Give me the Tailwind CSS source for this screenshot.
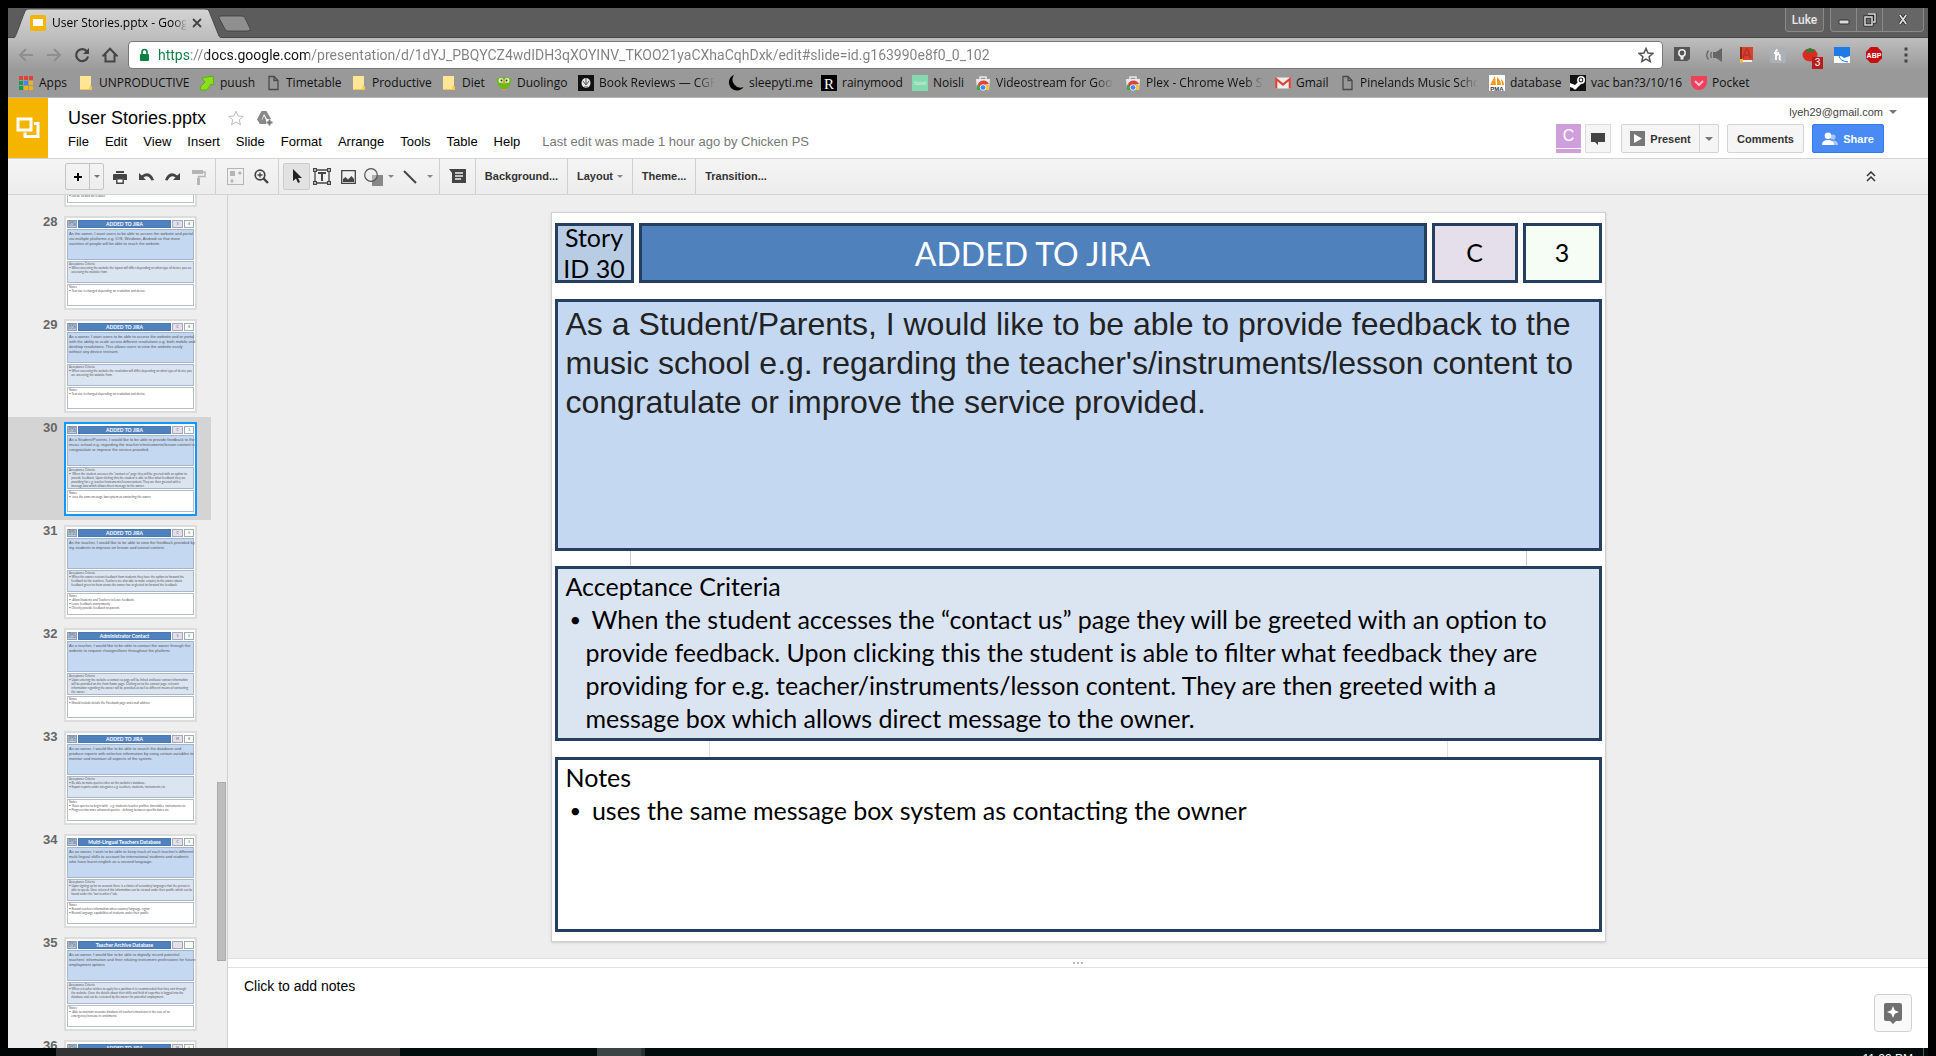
<!DOCTYPE html>
<html lang="en">
<head>
<meta charset="utf-8">
<title>User Stories.pptx - Google Slides</title>
<script src="https://cdn.jsdelivr.net/npm/@tailwindcss/browser@4"></script>
</head>
<body class="flex h-screen flex-col overflow-hidden bg-black font-['Liberation_Sans',Arial,sans-serif] text-black">
<svg class="hidden">
  <symbol id="folder" viewBox="0 0 16 16"><path d="M2 1h11v10l1 1v3H2z" fill="#ffe08a"/><path d="M2 1h11v13H2z" fill="#ffe596"/><path d="M11 15l1-5 2 2v3z" fill="#f6c94b"/><path d="M2 14h10v1H2z" fill="#efc55a"/></symbol>
  <symbol id="page" viewBox="0 0 16 16"><path d="M4 1.5h5l4 4v9H4zM9 1.5v4h4" fill="none" stroke="#4a4a4a" stroke-width="1.3"/></symbol>
  <symbol id="webstore" viewBox="0 0 16 16"><path d="M1 4h14l-1 11H2z" fill="#e9e9e9"/><path d="M5 4V2h6v2" fill="none" stroke="#e9e9e9" stroke-width="1.5"/><path d="M2 15a6 6 0 0 1 1-6l3 4v2z" fill="#3aa757"/><path d="M3 9a6 6 0 0 1 11 0l-6 1-3 3z" fill="#db4437"/><path d="M9 10h5l-.4 5H9z" fill="#fbc02d"/><circle cx="8" cy="12.5" r="2.8" fill="#4285f4" stroke="#fff" stroke-width=".8"/></symbol>
  <symbol id="caret" viewBox="0 0 8 4"><path d="M0 0h8L4 4z" fill="currentColor"/></symbol>
</svg>

<div class="mx-2 mt-2 flex min-h-0 flex-1 flex-col bg-white">

  <!-- Window title strip -->
  <header class="flex h-[30px] shrink-0 items-start justify-between border-b border-[#484848] bg-[#5c5c5c]">
    <div class="flex items-start">
      <div class="relative ml-1 h-[30px] w-[210px]">
        <svg class="absolute inset-0" width="210" height="30" viewBox="0 0 210 30"><defs><linearGradient id="tab" x1="0" y1="0" x2="0" y2="1"><stop offset="0" stop-color="#d4d4d4"/><stop offset="1" stop-color="#bdbdbd"/></linearGradient></defs><path d="M2 30C4 30 12 3 14 2Q15 1 17 1H193Q196 1 197 3L207 28Q208 30 210 30Z" fill="url(#tab)"/><path d="M2 30C4 30 12 3 14 2Q15 1 17 1H193Q196 1 197 3L207 28Q208 30 210 30" fill="none" stroke="#484848"/></svg>
        <div class="relative flex h-[30px] items-center pl-[18px]">
          <svg width="16" height="16" viewBox="0 0 16 16"><rect width="16" height="16" rx="2" fill="#f5b400"/><path d="M3 4h10v7H3z" fill="#fff"/></svg>
          <span class="ml-1.5 w-[134px] overflow-hidden bg-linear-to-r from-black from-90% to-black/10 bg-clip-text font-['Open_Sans',sans-serif] text-xs leading-4 whitespace-nowrap text-transparent">User Stories.pptx - Google Slides</span>
          <button class="ml-1.5" aria-label="Close tab"><svg width="10" height="10" viewBox="0 0 10 10"><path d="M1 1l8 8M9 1L1 9" stroke="#444" stroke-width="1.8"/></svg></button>
        </div>
      </div>
      <button class="mt-[7px] -ml-1" aria-label="New tab"><svg width="34" height="17" viewBox="0 0 34 18" preserveAspectRatio="none"><path d="M3 1H24Q26 1 27 3L32 14Q33 17 30 17H10Q8 17 7 15L1 3Q0 1 3 1Z" fill="#8f8f8f" stroke="#454545"/></svg></button>
    </div>
    <div class="flex pr-1 text-[#e8e8e8]">
      <button class="mr-1.5 h-6 w-[39px] rounded-b border border-t-0 border-[#8a8a8a] bg-[#666] font-['Roboto',sans-serif] text-xs leading-4 font-medium">Luke</button>
      <div class="flex h-6 rounded-b border border-t-0 border-[#8a8a8a] bg-[#666]">
        <button class="flex w-[26px] items-center justify-center border-r border-[#8a8a8a]" aria-label="Minimise"><svg width="12" height="12" viewBox="0 0 12 12"><rect x="1" y="6" width="10" height="4" rx="1" fill="#ddd" stroke="#333"/></svg></button>
        <button class="flex w-[26px] items-center justify-center border-r border-[#8a8a8a]" aria-label="Restore"><svg width="14" height="14" viewBox="0 0 14 14"><path d="M5 1h7v8h-2M2 4h7v8H2z" fill="none" stroke="#222" stroke-width="3"/><path d="M5 1h7v8h-2M2 4h7v8H2z" fill="none" stroke="#ddd" stroke-width="1.5"/></svg></button>
        <button class="flex w-10 items-center justify-center" aria-label="Close"><svg width="12" height="11" viewBox="0 0 13 12"><path d="M3 1l7 10M10 1L3 11" stroke="#222" stroke-width="3.6"/><path d="M3 1l7 10M10 1L3 11" stroke="#ddd" stroke-width="2"/></svg></button>
      </div>
    </div>
  </header>

  <!-- Address bar and bookmarks -->
  <div class="shrink-0 border-b border-[#b5b5b5] bg-linear-to-b from-[#bebebe] to-[#999] to-55% pb-0.5">
    <div class="flex h-[33px] items-center pr-1.5 pl-1">
      <button class="flex w-7 justify-center" aria-label="Back"><svg width="16" height="16" viewBox="0 0 16 16"><path d="M15 8H2M8 2L2 8l6 6" fill="none" stroke="#8e8e8e" stroke-width="2"/></svg></button>
      <button class="flex w-7 justify-center" aria-label="Forward"><svg width="16" height="16" viewBox="0 0 16 16"><path d="M1 8h13M8 2l6 6-6 6" fill="none" stroke="#8e8e8e" stroke-width="2"/></svg></button>
      <button class="flex w-7 justify-center" aria-label="Reload"><svg width="16" height="16" viewBox="0 0 16 16"><path d="M13 4.5A6 6 0 1 0 14 9.5" fill="none" stroke="#444" stroke-width="2.2"/><path d="M15 1v6H9z" fill="#444"/></svg></button>
      <button class="flex w-7 justify-center" aria-label="Home"><svg width="16" height="16" viewBox="0 0 16 16"><path d="M1.5 8.5L8 1.8l6.500 6.700H12.500V14.500h-9V8.500z" fill="none" stroke="#444" stroke-width="2"/></svg></button>
      <div class="ml-1 flex h-7 flex-1 items-center rounded-sm border border-[#777] bg-white px-2">
        <svg class="mx-0.5" width="11" height="14" viewBox="0 0 11 14"><rect x="1" y="6" width="9" height="7" rx="1" fill="#0b8043"/><path d="M3 6V4a2.500 2.500 0 0 1 5 0v2" fill="none" stroke="#0b8043" stroke-width="1.600"/></svg>
        <input aria-label="Address" class="ml-1.5 min-w-0 flex-1 bg-[linear-gradient(90deg,#0b8043_0_33px,#808080_33px_49px,#111_49px_151px,#808080_151px)] bg-clip-text font-['Roboto',sans-serif] text-sm leading-5 text-transparent outline-none" value="https://docs.google.com/presentation/d/1dYJ_PBQYCZ4wdIDH3qXOYINV_TKOO21yaCXhaCqhDxk/edit#slide=id.g163990e8f0_0_102">
        <button aria-label="Bookmark this page"><svg width="16" height="16" viewBox="0 0 16 16"><path d="M8 1.500l2 4.600 4.800.4-3.700 3.200 1.100 4.800L8 12l-4.200 2.500 1.100-4.800L1.200 6.500 6 6.100z" fill="none" stroke="#555" stroke-width="1.500"/></svg></button>
      </div>
      <div class="ml-[3px] flex">
        <button class="flex w-8 justify-center" aria-label="Page dimmer"><svg width="16" height="16" viewBox="0 0 16 16"><path d="M0 0h16v12l-3 2H0z" fill="#555"/><circle cx="8" cy="6" r="3.200" fill="none" stroke="#eee" stroke-width="1.500"/><path d="M6.500 9h3v3.500h-3z" fill="#eee"/></svg></button>
        <button class="flex w-8 justify-center" aria-label="Volume"><svg width="18" height="16" viewBox="0 0 18 16"><path d="M8 5h3l6-4v14l-6-4H8z" fill="#666"/><path d="M6.500 5Q5 8 6.500 11M3.500 3.500Q0 8 3.500 12.500" fill="none" stroke="#666" stroke-width="1.400"/></svg></button>
        <button class="flex w-8 justify-center" aria-label="Dictionary"><svg width="16" height="16" viewBox="0 0 16 16"><path d="M2 0h13v13H4l-2 2z" fill="#d8402f"/><path d="M2 0h2v13l-2 1z" fill="#8d2a20"/><path d="M5 11l3.200-9h1.200l3.200 9M6.500 8h5" fill="none" stroke="#b53224" stroke-width="1.500"/><path d="M2 13h12v2H3z" fill="#eee"/><path d="M2 12h3v4l-1.500-1L2 16z" fill="#fbc02d"/></svg></button>
        <button class="flex w-8 justify-center" aria-label="Honey"><svg width="16" height="16" viewBox="0 0 16 16"><rect width="16" height="16" rx="2" fill="#adb1b4"/><path d="M6 13V4.500Q6 3 7.500 3M4 6h5M6 9Q7.500 7 9 7.500T9.500 11q0 2 1.500 1.500" fill="none" stroke="#fff" stroke-width="1.800"/></svg></button>
        <button class="relative flex w-8 justify-center" aria-label="Timer"><svg width="16" height="16" viewBox="0 0 16 16"><ellipse cx="8" cy="8" rx="7.500" ry="6.500" fill="#d92b20"/><path d="M3 3l3-1 2-1 2 1 4 1-3 1 1 2-3-1-1 1-1-1-3 1 1-2z" fill="#2e7d32"/></svg><span class="absolute top-2.5 left-[18px] h-3 w-[11px] bg-[#b71c1c] text-center text-[10px] leading-3 text-white">3</span></button>
        <button class="flex w-8 justify-center" aria-label="Wave"><svg width="16" height="16" viewBox="0 0 16 16"><path d="M0 0h16v16H0z" fill="#1e7be6"/><path d="M0 9h6q2 0 4 2l6-2v7H0z" fill="#fff"/><path d="M5 9q1 5 9 6" fill="none" stroke="#1e7be6"/></svg></button>
        <button class="flex w-8 justify-center" aria-label="Adblock"><svg width="16" height="16" viewBox="0 0 16 16"><path d="M4.700 0h6.600L16 4.700v6.600L11.300 16H4.700L0 11.300V4.700z" fill="#c70d0d"/><text x="8" y="10.500" font-size="7" font-weight="700" font-family="Liberation Sans" text-anchor="middle" fill="#fff">ABP</text></svg></button>
        <button class="flex w-8 justify-center" aria-label="Menu"><svg width="4" height="16" viewBox="0 0 4 16"><path d="M.5.500h3v3h-3zM.5 6.500h3v3h-3zM.5 12.500h3v3h-3z" fill="#444"/></svg></button>
      </div>
    </div>
    <nav class="flex h-6 items-center pl-2.5 font-['Open_Sans',sans-serif] text-xs leading-4 whitespace-nowrap text-[#111]">
      <a href="#" class="flex w-[60px] gap-[5px]"><svg width="16" height="16" viewBox="0 0 16 16"><path d="M1 1h4v4H1z" fill="#db4437"/><path d="M6 1h4v4H6zM11 1h4v4h-4z" fill="#db4437"/><path d="M1 6h4v4H1z" fill="#0f9d58"/><path d="M6 6h4v4H6z" fill="#4285f4"/><path d="M11 6h4v4h-4z" fill="#f4b400"/><path d="M1 11h4v4H1z" fill="#0f9d58"/><path d="M6 11h4v4H6zM11 11h4v4h-4z" fill="#f4b400"/></svg>Apps</a>
      <a href="#" class="flex w-[121px] gap-[5px]"><svg width="16" height="16"><use href="#folder"/></svg>UNPRODUCTIVE</a>
      <a href="#" class="flex w-[66px] gap-[5px]"><svg width="16" height="16" viewBox="0 0 16 16"><path d="M3 3l11-2 1 9-3-1-4 6H1l1-4 4-4z" fill="#8be01a" stroke="#5fae12"/></svg>puush</a>
      <a href="#" class="flex w-[86px] gap-[5px]"><svg width="16" height="16"><use href="#page"/></svg>Timetable</a>
      <a href="#" class="flex w-[90px] gap-[5px]"><svg width="16" height="16"><use href="#folder"/></svg>Productive</a>
      <a href="#" class="flex w-[55px] gap-[5px]"><svg width="16" height="16"><use href="#folder"/></svg>Diet</a>
      <a href="#" class="flex w-[82px] gap-[5px]"><svg width="16" height="16" viewBox="0 0 16 16"><path d="M0 3l3 1q5-4 10 0l3-1-2 7q-2 4-6 4t-6-4z" fill="#6cb71c"/><circle cx="5" cy="5.500" r="2.500" fill="#dff2b0"/><circle cx="11" cy="5.500" r="2.500" fill="#dff2b0"/><circle cx="5.500" cy="5.500" r="1" fill="#333"/><circle cx="10.500" cy="5.500" r="1" fill="#333"/><path d="M6.500 7h3L8 10zM6 14h4l-2 2z" fill="#f39b1f"/></svg>Duolingo</a>
      <a href="#" class="flex w-[150px] gap-[5px] pr-3.5"><svg class="shrink-0" width="16" height="16" viewBox="0 0 16 16"><path d="M0 0h16v16H0z" fill="#111"/><ellipse cx="8" cy="8" rx="4.500" ry="5" fill="#e8e8e8"/><path d="M8 3v6M5 6l3 4 3-4M6 12h4" fill="none" stroke="#555"/></svg><span class="flex-1 overflow-hidden bg-linear-to-r from-[#111] from-85% to-[#111]/5 bg-clip-text text-transparent">Book Reviews — CGPGrey</span></a>
      <a href="#" class="flex w-[93px] gap-[5px]"><svg width="16" height="16" viewBox="0 0 16 16"><path d="M6 0A8 8 0 1 0 15.500 12 8 8 0 0 1 6 0z" fill="#000"/></svg>sleepyti.me</a>
      <a href="#" class="flex w-[91px] gap-[5px]"><svg width="16" height="16" viewBox="0 0 16 16"><path d="M0 0h16v16H0z" fill="#000"/><text x="8" y="13.500" font-size="15" font-family="Liberation Serif" text-anchor="middle" fill="#fff">R</text></svg>rainymood</a>
      <a href="#" class="flex w-[63px] gap-[5px]"><svg width="16" height="16" viewBox="0 0 16 16"><path d="M0 0h16v16H0z" fill="#84d9ae"/><text x="8" y="9.500" font-size="5" font-family="Liberation Sans" text-anchor="middle" fill="#d7f5e6">Noisli</text></svg>Noisli</a>
      <a href="#" class="flex w-[150px] gap-[5px] pr-3"><svg class="shrink-0" width="16" height="16"><use href="#webstore"/></svg><span class="flex-1 overflow-hidden bg-linear-to-r from-[#111] from-85% to-[#111]/5 bg-clip-text text-transparent">Videostream for Google Chrome</span></a>
      <a href="#" class="flex w-[150px] gap-[5px] pr-3"><svg class="shrink-0" width="16" height="16"><use href="#webstore"/></svg><span class="flex-1 overflow-hidden bg-linear-to-r from-[#111] from-85% to-[#111]/5 bg-clip-text text-transparent">Plex - Chrome Web Store</span></a>
      <a href="#" class="flex w-16 gap-[5px]"><svg width="16" height="16" viewBox="0 0 16 16"><path d="M0 2.500h16v11H0z" fill="#eee"/><path d="M1.200 13.500V4L8 9.500 14.800 4v9.500" fill="none" stroke="#db4437" stroke-width="2.200"/></svg>Gmail</a>
      <a href="#" class="flex w-[150px] gap-[5px] pr-3"><svg class="shrink-0" width="16" height="16"><use href="#page"/></svg><span class="flex-1 overflow-hidden bg-linear-to-r from-[#111] from-85% to-[#111]/5 bg-clip-text text-transparent">Pinelands Music School</span></a>
      <a href="#" class="flex w-[81px] gap-[5px]"><svg width="16" height="16" viewBox="0 0 16 16"><path d="M0 0h16v16H0z" fill="#fff"/><path d="M6 1l1 9H1zM8 2q4 3 4 8H8zM12 4q3 2 3 6h-2z" fill="#f39b1f"/><text x="8" y="15.500" font-size="6" font-weight="700" font-family="Liberation Sans" text-anchor="middle" fill="#334">PMA</text></svg>database</a>
      <a href="#" class="flex w-[121px] gap-[5px]"><svg width="16" height="16" viewBox="0 0 16 16"><path d="M0 0h16v16H0z" fill="#111"/><circle cx="11" cy="5" r="3.200" fill="none" stroke="#fff" stroke-width="1.600"/><circle cx="11" cy="5" r="1.400" fill="#fff"/><path d="M0 8l5 2 3-3 3 2-4 4q-2 3-4 0l-3-1z" fill="#fff"/></svg>vac ban?3/10/16</a>
      <a href="#" class="flex gap-[5px]"><svg width="16" height="16" viewBox="0 0 16 16"><path d="M0 1h16v6a8 8 0 0 1-16 0z" fill="#ee4056"/><path d="M4 6l4 4 4-4" fill="none" stroke="#fbd" stroke-width="2"/></svg>Pocket</a>
    </nav>
  </div>

  <!-- Document header -->
  <div class="flex h-[60px] shrink-0">
    <a href="#" aria-label="Slides home" class="flex w-10 items-center justify-center bg-[#f5b400]"><svg width="24" height="22" viewBox="0 0 24 22"><path d="M2 2h13v11H2z" fill="none" stroke="#fff" stroke-width="3"/><path d="M18 6.500h4V19.500H9v-4" fill="none" stroke="#fff" stroke-width="3"/></svg></a>
    <div class="flex-1 pl-5">
      <div class="flex h-10 items-center">
        <h1 class="text-lg leading-6">User Stories.pptx</h1>
        <button class="ml-[22px]" aria-label="Star"><svg width="16" height="16" viewBox="0 0 16 16"><path d="M8 1.200l2 4.800 5.200.4-4 3.400 1.300 5L8 12l-4.500 2.800 1.300-5-4-3.400L6 6z" fill="none" stroke="#bbb"/></svg></button>
        <button class="ml-3" aria-label="Add to My Drive"><svg width="17" height="16" viewBox="0 0 17 16"><path d="M5.500 1h5l4.500 8h-4L8 4 4 14 1 9.500z" fill="#888"/><path d="M5 10h5v4H3.500zM8 6l2 4H6z" fill="#888"/><path d="M13.500 9v7M10 12.500h7" stroke="#fff" stroke-width="3"/><path d="M13.500 9.500v6M10.500 12.500h6" stroke="#777" stroke-width="2"/></svg></button>
      </div>
      <div class="-mt-1 flex gap-4 text-[13px] leading-4 whitespace-nowrap">
        <button>File</button><button>Edit</button><button>View</button><button>Insert</button><button>Slide</button><button>Format</button><button>Arrange</button><button>Tools</button><button>Table</button><button>Help</button><a href="#" class="ml-1.5 text-[#777]">Last edit was made 1 hour ago by Chicken PS</a>
      </div>
    </div>
    <div class="pr-[31px]">
      <button class="ml-auto flex h-[26px] items-center gap-1.5 pt-0.5 text-[11px] leading-4 text-[#444]">lyeh29@gmail.com<svg class="text-[#777]" width="8" height="4"><use href="#caret"/></svg></button>
      <div class="flex pr-[13px] text-[11px] leading-4 font-bold text-[#333]">
        <div class="mr-1 flex w-[25px] flex-col gap-px text-center"><span class="bg-[#cf9fdb] text-base leading-6 font-normal text-white">C</span><span class="h-1 bg-[#cf9fdb]"></span></div>
        <button class="mr-2.5 flex h-[29px] w-[26px] items-center justify-center border border-[#dcdcdc] bg-[#f5f5f5]" aria-label="Chat"><svg width="14" height="14" viewBox="0 0 14 14"><path d="M0 1h14v9H7v3L4 10H0z" fill="#444"/></svg></button>
        <div class="mr-2 flex h-[29px] rounded-xs border border-[#d4d4d4] bg-[#f5f5f5]">
          <button class="flex w-[78px] items-center justify-center gap-[5px] border-r border-[#d4d4d4]"><svg width="15" height="15" viewBox="0 0 15 15"><path d="M0 0h15v15H0z" fill="#777"/><path d="M4 3l8 4.500L4 12z" fill="#fff"/></svg>Present</button>
          <button class="flex w-[18px] items-center justify-center text-[#777]" aria-label="Present options"><svg width="8" height="4"><use href="#caret"/></svg></button>
        </div>
        <button class="mr-2 h-[29px] w-[77px] rounded-xs border border-[#d4d4d4] bg-[#f5f5f5]">Comments</button>
        <button class="flex h-[29px] w-[72px] items-center justify-center gap-[5px] rounded-xs border border-[#3079ed] bg-[#4a8af4] text-white"><svg width="16" height="14" viewBox="0 0 16 14"><circle cx="11" cy="5" r="2.600" fill="#a9c9fb"/><path d="M9 13q0-4 2-4.500 5 0 5 4.500z" fill="#a9c9fb"/><circle cx="6" cy="3.800" r="3.300" fill="#fff"/><path d="M0 13q0-5 6-5t6 5z" fill="#fff"/></svg>Share</button>
      </div>
    </div>
  </div>

  <!-- Editing toolbar -->
  <div class="flex h-[37px] shrink-0 items-center justify-between border-y border-[#d4d4d4] bg-linear-to-b from-[#f5f5f5] to-[#ececec] text-[11px] font-bold text-[#333]">
    <div class="flex h-full items-center">
      <div class="mr-[3px] ml-[57px] flex h-[27px] w-[39px] rounded-xs border border-[#c4c4c4]">
        <button class="flex w-6 items-center justify-center border-r border-[#c4c4c4]" aria-label="New slide"><svg width="8" height="8" viewBox="0 0 8 8"><path d="M4 0v8M0 4h8" stroke="#000" stroke-width="2"/></svg></button>
        <button class="flex flex-1 items-center justify-center text-[#777]" aria-label="New slide layout"><svg width="6" height="3" viewBox="0 0 8 4"><use href="#caret"/></svg></button>
      </div>
      <button class="flex w-[26px] justify-center" aria-label="Print"><svg width="14" height="14" viewBox="0 0 14 14"><path d="M3 1h8v2H3zM1 4h12q1 0 1 1v5h-3V8H3v2H0V5q0-1 1-1z" fill="#444"/><path d="M3.800 8.800h6.400v4.400H3.800z" fill="#fff" stroke="#444" stroke-width="1.400"/></svg></button>
      <button class="flex w-[26px] justify-center" aria-label="Undo"><svg width="15" height="10" viewBox="0 0 15 10"><path d="M0 1v7h7L4.500 5.500Q9 2 12.500 8.500L15 8Q11-2.500 2.700 3.500z" fill="#444"/></svg></button>
      <button class="flex w-[26px] justify-center" aria-label="Redo"><svg width="15" height="10" viewBox="0 0 15 10"><path d="M15 1v7H8l2.500-2.500Q6 2 2.500 8.500L0 8Q4-2.500 12.300 3.500z" fill="#444"/></svg></button>
      <button class="flex w-[28px] justify-center" aria-label="Paint format"><svg width="14" height="16" viewBox="0 0 14 16"><path d="M0 1h11v4H0z" fill="#b5b5b5"/><path d="M11 3h2v4.500H6.500V10" fill="none" stroke="#b5b5b5" stroke-width="1.500"/><path d="M5 9h3v7H5z" fill="#b5b5b5"/></svg></button>
      <span class="ml-0.5 h-full w-px bg-[#d0d0d0]"></span>
      <button class="ml-1.5 flex w-[26px] justify-center" aria-label="Fit"><svg width="17" height="17" viewBox="0 0 17 17"><rect x=".5" y=".5" width="16" height="16" fill="none" stroke="#b5b5b5"/><path d="M11 5l3 0M12.500 3.500L14 5l-1.500 1.500M5 11v3M3.500 12.500L5 14l1.500-1.500" fill="none" stroke="#b5b5b5" stroke-width="1.300"/><path d="M3 3h5v5H3z" fill="#b5b5b5"/></svg></button>
      <button class="flex w-[26px] justify-center" aria-label="Zoom"><svg width="15" height="15" viewBox="0 0 15 15"><circle cx="6" cy="6" r="4.800" fill="none" stroke="#444" stroke-width="1.700"/><path d="M9.500 9.500L14 14" stroke="#444" stroke-width="2.400"/><path d="M6 3.500v5M3.500 6h5" stroke="#444" stroke-width="1.300"/></svg></button>
      <span class="ml-1 h-full w-px bg-[#d0d0d0]"></span>
      <button class="ml-1 flex h-[27px] w-[27px] items-center justify-center rounded-xs border border-[#ccc] bg-[#e2e2e2]" aria-label="Select"><svg width="10" height="15" viewBox="0 0 10 15"><path d="M1 0v12l3-2.500L6 14l2-1-2-4h4z" fill="#222"/></svg></button>
      <button class="flex w-6 justify-center" aria-label="Text box"><svg width="18" height="17" viewBox="0 0 18 17"><path d="M2 2h14v13H2z" fill="none" stroke="#444" stroke-width="1.300"/><path d="M0 0h4v4H0zM14 0h4v4h-4zM0 13h4v4H0zM14 13h4v4h-4z" fill="#444"/><path d="M1.200 1.200h1.600v1.600H1.200zM15.200 1.200h1.600v1.600h-1.600zM1.200 14.200h1.600v1.600H1.200zM15.200 14.200h1.600v1.600h-1.600z" fill="#fff"/><path d="M5 5h8M9 5v8" stroke="#444" stroke-width="2"/></svg></button>
      <button class="flex w-7 justify-center" aria-label="Image"><svg width="15" height="14" viewBox="0 0 15 14"><path d="M.7.700h13.600v12.600H.7z" fill="none" stroke="#444" stroke-width="1.300"/><path d="M2 12V9l2.500-2L7 9.500 10.500 6 13 9v3z" fill="#444"/></svg></button>
      <button class="flex w-[34px] items-center justify-center gap-1 text-[#888]" aria-label="Shape"><svg width="20" height="18" viewBox="0 0 20 18"><path d="M8 7h11v11H8z" fill="#888"/><circle cx="7" cy="7" r="6.300" fill="#eee" fill-opacity=".4" stroke="#555" stroke-width="1.200"/></svg><svg width="6" height="3" viewBox="0 0 8 4"><use href="#caret"/></svg></button>
      <button class="ml-1 flex w-[35px] items-center justify-center gap-2.5 text-[#888]" aria-label="Line"><svg width="14" height="14" viewBox="0 0 14 14"><path d="M1 1l12 12" stroke="#444" stroke-width="2"/></svg><svg width="6" height="3" viewBox="0 0 8 4"><use href="#caret"/></svg></button>
      <span class="ml-1 h-full w-px bg-[#d0d0d0]"></span>
      <button class="flex w-[35px] justify-center" aria-label="Comment"><svg width="17" height="15" viewBox="0 0 17 15"><path d="M0 0h17v14H3V4z" fill="#444"/><path d="M6 4h8M6 7h8M6 10h6" stroke="#eee" stroke-width="1.300"/></svg></button>
      <span class="h-full w-px bg-[#d0d0d0]"></span>
      <button class="w-[91px]">Background...</button>
      <span class="h-full w-px bg-[#d0d0d0]"></span>
      <button class="flex w-16 items-center justify-center gap-1">Layout<svg class="text-[#888]" width="6" height="3" viewBox="0 0 8 4"><use href="#caret"/></svg></button>
      <span class="h-full w-px bg-[#d0d0d0]"></span>
      <button class="w-[62px]">Theme...</button>
      <span class="h-full w-px bg-[#d0d0d0]"></span>
      <button class="w-20">Transition...</button>
    </div>
    <button class="mr-[52px]" aria-label="Hide menus"><svg width="10" height="11" viewBox="0 0 10 11"><path d="M1 5l4-4 4 4M1 10l4-4 4 4" fill="none" stroke="#333" stroke-width="1.500"/></svg></button>
  </div>

  <!-- Workspace -->
  <div class="flex min-h-0 flex-1">
    <aside class="flex w-[220px] shrink-0 border-r border-[#d0d0d0] bg-[#eee]">
      <ol id="filmstrip" class="w-[203px] overflow-hidden"></ol>
      <div class="flex flex-1 flex-col justify-end pb-[87px] pl-1.5"><div class="h-[179px] w-[9px] border border-[#aaa] bg-[#bebebe]"></div></div>
    </aside>

    <main class="flex min-w-0 flex-1 flex-col">
      <div class="flex min-h-0 flex-1 items-center justify-center bg-[#eee]">
        <section class="w-[1055px] border border-[#d0d0d0] bg-white px-[3px] pt-2.5 pb-[9px] font-['Lato',sans-serif] text-[25px] leading-[33px] shadow-sm">
          <div class="flex h-[60px] gap-[5px] text-center">
            <div class="flex w-[79px] items-center justify-center border-3 border-[#243f60] bg-[#b8cce4] leading-[31px] whitespace-nowrap">Story<br>ID 30</div>
            <h2 class="flex flex-1 items-center justify-center border-3 border-[#243f60] bg-[#4f81bd] pt-0.5 text-[32px] text-white">ADDED TO JIRA</h2>
            <div class="flex w-[86px] items-center justify-center border-3 border-[#243f60] bg-[#e5dfec]">C</div>
            <div class="flex w-[79px] items-center justify-center border-3 border-[#243f60] bg-[#f5fdf5]">3</div>
          </div>
          <p class="mt-4 h-[252px] border-3 border-[#243f60] bg-[#c5d8f1] px-2 pt-[3px] font-['Liberation_Sans',Arial,sans-serif] text-[32px] leading-[39px] text-[#222]">As a Student/Parents, I would like to be able to provide feedback to the<br>music school e.g. regarding the teacher's/instruments/lesson content to<br>congratulate or improve the service provided.</p>
          <div class="mx-[75px] h-[15px] border-x border-[#ccc]"></div>
          <div class="h-[175px] border-3 border-[#243f60] bg-[#dbe5f1] px-2 pt-px">
            <h3>Acceptance Criteria</h3>
            <ul><li class="relative pl-5 whitespace-nowrap"><span class="absolute left-1 text-xl leading-[33px]">•</span>&nbsp;When the student accesses the “contact us” page they will be greeted with an option to<br>provide feedback. Upon clicking this the student is able to filter what feedback they are<br>providing for e.g. teacher/instruments/lesson content. They are then greeted with a<br>message box which allows direct message to the owner.</li></ul>
          </div>
          <div class="mx-[154px] h-4 border-x border-[#e0e0e0]"></div>
          <div class="h-[175px] border-3 border-[#243f60] bg-white px-2 pt-px">
            <h3>Notes</h3>
            <ul><li class="relative pl-5 whitespace-nowrap"><span class="absolute left-1 text-xl leading-[33px]">•</span>&nbsp;uses the same message box system as contacting the owner</li></ul>
          </div>
        </section>
      </div>
      <div class="flex h-2.5 items-center justify-center gap-0.5 border-y border-[#e0e0e0]"><i class="size-0.5 bg-[#bbb]"></i><i class="size-0.5 bg-[#bbb]"></i><i class="size-0.5 bg-[#bbb]"></i></div>
      <div class="flex h-20 items-end pr-4 pb-4">
        <textarea aria-label="Speaker notes" placeholder="Click to add notes" class="h-16 flex-1 resize-none self-start px-4 pt-2.5 text-sm leading-4 outline-none placeholder:text-black"></textarea>
        <button class="flex size-[38px] items-center justify-center rounded-sm border border-[#d0d0d0] bg-[#f9f9f9]" aria-label="Explore"><svg width="18" height="21" viewBox="0 0 18 21"><path d="M2 0h14q2 0 2 2v14q0 2-2 2h-4l-3 3-3-3H2q-2 0-2-2V2q0-2 2-2z" fill="#707070"/><path d="M9 3l1.700 4.300L15 9l-4.300 1.700L9 15l-1.700-4.300L3 9l4.300-1.700z" fill="#fff"/></svg></button>
      </div>
    </main>
  </div>
</div>

<!-- Desktop taskbar -->
<footer class="flex h-2 shrink-0 overflow-hidden bg-[#010c0d]">
  <span class="w-14 bg-[#000505]"></span><span class="w-[344px] bg-[#333]"></span><span class="w-[197px]"></span><span class="w-11 bg-[#3a4444]"></span><span class="w-1 bg-[#2a3030]"></span>
  <span class="mr-1 ml-auto border-r border-[#555] pt-[5px] pr-2.5 text-xs leading-3 text-white">11:22 PM</span>
  <span class="w-2 bg-black"></span>
</footer>

<script>
const slides = [
  { n: 27, title: "ADDED TO JIRA", a: "", b: "", story: [], ac: [], notes: ["", "", "• can be viewed on a tablet"] },
  { n: 28, title: "ADDED TO JIRA", a: "S", b: "8", story: ["As the owner, I want users to be able to access the website and portal", "via multiple platforms e.g. IOS, Windows, Android so that more", "varieties of people will be able to reach the website."], ac: ["• When accessing the website the layout will differ depending on what type of device you are", "   accessing the website from."], notes: ["• Text size is changed depending on resolution and device."] },
  { n: 29, title: "ADDED TO JIRA", a: "C", b: "8", story: ["As a owner, I want users to be able to access the website and or portal", "with the ability to scale across different resolutions e.g. both mobile and", "desktop resolutions. This allows users to view the website easily", "without any device restraint."], ac: ["• When accessing the website the resolution will differ depending on what type of device you", "   are accessing the website from."], notes: ["• Text size is changed depending on resolution and device."] },
  { n: 30, title: "ADDED TO JIRA", a: "C", b: "3", story: ["As a Student/Parents, I would like to be able to provide feedback to the", "music school e.g. regarding the teacher's/instruments/lesson content to", "congratulate or improve the service provided."], ac: ["•  When the student accesses the “contact us” page they will be greeted with an option to", "   provide feedback. Upon clicking this the student is able to filter what feedback they are", "   providing for e.g. teacher/instruments/lesson content. They are then greeted with a", "   message box which allows direct message to the owner."], notes: ["•  uses the same message box system as contacting the owner"] },
  { n: 31, title: "ADDED TO JIRA", a: "C", b: "5", story: ["As the teacher, I would like to be able to view the feedback provided by", "my students to improve on lesson and tutorial content."], ac: ["• When the owner reviews feedback from students they have the option to forward the", "   feedback to the teachers. Teachers are also able to make enquiry to the owner about", "   feedback given to them across the owner has neglected to forward the feedback."], notes: ["•  Allow Students and Teachers to leave feedback.", "• Leave feedback anonymously", "• Directly provide feedback to parents"] },
  { n: 32, title: "Administrator Contact", a: "S", b: "5", story: ["As a teacher, I would like to be able to contact the owner through the", "website to request changes/fixes throughout the platform."], ac: ["• Upon entering the website a contact us page will be linked and basic contact information", "   will be provided on the front/home page. Clicking on to the contact page, relevant", "   information regarding the owner will be provided as well as different means of contacting", "   the owner"], notes: ["• Should include details like Facebook page and email address"] },
  { n: 33, title: "ADDED TO JIRA", a: "M", b: "8", story: ["As an owner, I would like to be able to search the database and", "produce reports with selective information by using certain variables to", "monitor and maintain all aspects of the system."], ac: ["• Be able to make queries/alter on the website's database.", "• Export reports under categories e.g. teachers, students, instruments etc"], notes: ["•  Basic queries to begin with - e.g. students/teacher profiles, timetables, instruments etc", "• Progress into more advanced queries - defining between specific dates etc"] },
  { n: 34, title: "Multi-Lingual Teachers Database", a: "C", b: "5", story: ["As an owner, I wish to be able to keep track of each teacher's different", "multi lingual skills to account for international students and students", "who have learnt english as a second language."], ac: ["• Upon signing up for an account there is a choice of secondary languages that the person is", "   able to speak. Once selected this information can be viewed under their profile which can be", "   found under the “our teachers” tab."], notes: ["• Record teachers information when country/language region", "• Record language capabilities of students under their profile"] },
  { n: 35, title: "Teacher Archive Database", a: "", b: "", story: ["As an owner, I would like to be able to digitally record potential", "teachers' information and their relating instrument professions for future", "employment options"], ac: ["• When a teacher wishes to apply for a position it is recommended that they sort through", "   the website. Once the details about their skills and field of expertise is logged into the", "   database and can be reviewed by the owner for potential employment."], notes: ["•  Able to maintain accurate database of teachers/musicians in the case of an", "   emergency/increase in enrolments"] },
  { n: 36, title: "ADDED TO JIRA", a: "M", b: "5", story: [], ac: [], notes: [] }
];
const lines = rows => rows.map(t => `<span class="block">${t || "&nbsp;"}</span>`).join("");
document.getElementById("filmstrip").innerHTML = slides.map((s, i) => `
  <li class="flex overflow-hidden ${i === 0 ? "h-4 items-end" : "h-[103px] items-start"} ${s.n === 30 ? "bg-[#d4d4d4]" : ""}">
    <span class="w-[56px] shrink-0 pt-[3px] pl-[35px] text-[13px] leading-4 font-bold text-[#666] ${i === 0 ? "invisible" : ""}">${s.n}</span>
    <div class="${i === 0 ? "mb-1" : "mt-[5px]"} flex h-[94px] w-[133px] shrink-0 flex-col gap-px border-2 bg-white px-px pt-0.5 font-['Lato',sans-serif] text-[3px] leading-1 whitespace-pre text-[#555] ${s.n === 30 ? "border-[#0f97ff]" : "border-[#dcdcdc]"}">
      <div class="flex h-2 gap-px text-center">
        <span class="w-2.5 border border-[#8b9db8] bg-[#b8cce4] leading-[3px]">Story\nID ${s.n}</span>
        <b class="flex-1 border border-[#4a78b0] bg-[#4f81bd] text-[5px] leading-1.5 text-white">${s.title}</b>
        <span class="w-[11px] border border-[#a0aabb] bg-[#e5dfec] leading-1.5">${s.a}</span>
        <span class="w-2.5 border border-[#a0aabb] bg-[#f5fdf5] leading-1.5">${s.b}</span>
      </div>
      <div class="h-[31px] border border-[#a3b5cd] bg-[#c5d8f1] px-px pt-px font-['Liberation_Sans',sans-serif] text-[4px] leading-[5px]">${lines(s.story)}</div>
      <div class="h-[22px] border border-[#a8b6c9] bg-[#dbe5f1] px-px"><span class="block">Acceptance Criteria</span>${lines(s.ac)}</div>
      <div class="h-[22px] border border-[#b3bccb] bg-white px-px"><span class="block">Notes</span>${lines(s.notes)}</div>
    </div>
  </li>`).join("");
</script>
</body>
</html>
